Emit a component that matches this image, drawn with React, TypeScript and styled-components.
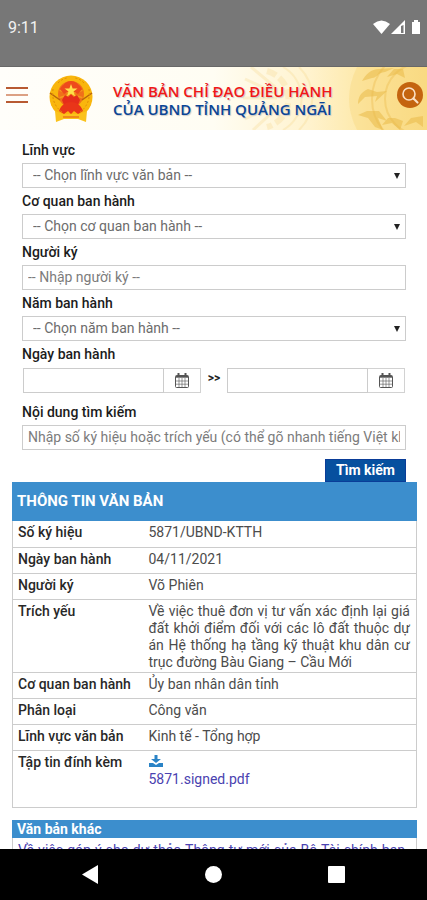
import React from "react";
import styled, { createGlobalStyle } from "styled-components";

const Global = createGlobalStyle`
  * { box-sizing: border-box; }
  body { margin: 0; background: #fff; font-family: Roboto, "Noto Sans", sans-serif; font-size: 14px; color: #4c4c4c; }
  button, input, select { font-family: inherit; font-size: inherit; }
`;

const Screen = styled.div`
  display: flex;
  flex-direction: column;
  height: 100vh;
  overflow: hidden;
`;

const StatusBar = styled.div`
  flex: none;
  display: flex;
  align-items: center;
  justify-content: space-between;
  height: 67px;
  padding: 0 5px 11px 8px;
  background: #777;
  border-bottom: 1px solid #686868;
  color: #f2f2f2;
  font-size: 16px;
`;

const StatusIcons = styled.div`
  display: flex;
  align-items: center;
  gap: 1px;
`;

const Page = styled.main`
  flex: 1;
  min-height: 0;
  overflow: hidden;
`;

const Header = styled.header`
  display: grid;
  height: 63px;
  background: linear-gradient(90deg, #fffefa 0%, #fffdf3 50%, #fff3cf 72%, #fde6a0 88%, #fbdc85 100%);
`;

const Pattern = styled.svg`
  grid-area: 1 / 1;
  justify-self: end;
  width: 220px;
  height: 63px;
`;

const HeaderRow = styled.div`
  grid-area: 1 / 1;
  z-index: 1;
  display: flex;
  align-items: center;
  padding: 0 4px 8px 6px;
`;

const IconButton = styled.button`
  flex: none;
  display: flex;
  padding: 0;
  border: 0;
  background: none;
  cursor: pointer;
`;

const Emblem = styled.svg`
  flex: none;
  margin: 8px 0 0 20px;
`;

const Title = styled.h1`
  flex: 1;
  margin: 9px 0 0 19px;
  font: 600 15px/18px "Open Sans", "Noto Sans", sans-serif;
  white-space: nowrap;
  text-shadow: 1px 1px 1px #c8c8c8;
`;

const TitleLine = styled.span<{ $blue?: boolean }>`
  display: block;
  color: ${(p) => (p.$blue ? "#0b4596" : "#f01818")};
`;

const Form = styled.form`
  display: flex;
  flex-direction: column;
  padding: 7px 21px 0 22px;
`;

const Label = styled.label`
  line-height: 26px;
  font-weight: 500;
  color: #1c1c1c;
`;

const Input = styled.input`
  width: 100%;
  min-width: 0;
  height: 25px;
  padding: 0 5px 2px;
  border: 1px solid #ccc;
  border-radius: 0;
  background: #fff;
  color: #666;
  &::placeholder { color: #7c7c7c; opacity: 1; }
`;

const SelectBox = styled.div`
  display: grid;
  align-items: center;
`;

const Select = styled.select`
  grid-area: 1 / 1;
  width: 100%;
  height: 25px;
  padding: 0 20px 2px 10px;
  border: 1px solid #ccc;
  border-radius: 0;
  background: #fff;
  color: #6c6c6c;
  appearance: none;
`;

const Arrow = styled.svg`
  grid-area: 1 / 1;
  justify-self: end;
  margin-right: 6px;
  pointer-events: none;
`;

const DateRow = styled.div`
  display: flex;
  align-items: center;
  padding: 1px 1px 0;
  margin-bottom: 6px;
`;

const DateField = styled.div`
  flex: 1;
  display: flex;
  min-width: 0;
`;

const CalendarButton = styled.button`
  flex: none;
  display: flex;
  align-items: center;
  justify-content: center;
  width: 37px;
  height: 25px;
  padding: 0;
  border: 1px solid #d2d2d2;
  border-left: 0;
  background: #fff;
  color: #444;
`;

const Between = styled.span`
  padding: 0 7px 6px;
  font-size: 12px;
  font-weight: 700;
  color: #222;
`;

const Submit = styled.button`
  align-self: flex-end;
  width: 81px;
  height: 23px;
  margin-top: 9px;
  padding: 0 0 1px;
  border: 1px solid #0a3d98;
  background: #06509f;
  color: #fff;
  font-weight: 700;
`;

const Section = styled.section`
  margin: 0 10px 12px 12px;
`;

const SectionTitle = styled.h2<{ $compact?: boolean }>`
  margin: 0;
  padding: 0 5px;
  background: #3c8ecd;
  color: #fff;
  font-size: ${(p) => (p.$compact ? 14 : 15)}px;
  line-height: ${(p) => (p.$compact ? 18 : 39)}px;
  font-weight: 700;
`;

const Details = styled.table`
  width: 100%;
  border-collapse: collapse;
  table-layout: fixed;
  border: 1px solid #ccc;
  border-top: 0;
`;

const Row = styled.tr<{ $tall?: boolean }>`
  height: ${(p) => (p.$tall ? 57 : 26)}px;
  border-bottom: 1px solid #ccc;
`;

const Term = styled.th`
  width: 131px;
  padding: 3px 0 1px 5px;
  text-align: left;
  vertical-align: top;
  font-weight: 500;
  line-height: 17px;
  color: #282828;
`;

const Value = styled.td`
  padding: 3px 6px 1px 5px;
  vertical-align: top;
  text-align: justify;
  line-height: 17px;
`;

const FileLink = styled.a`
  display: block;
  color: #4a42b0;
  text-decoration: none;
`;

const OtherList = styled.ul`
  margin: 0;
  padding: 4px 11px 4px 5px;
  border: 1px solid #ccc;
  border-top: 0;
  list-style: none;
  line-height: 17px;
  text-align: justify;
`;

const NavBar = styled.nav`
  flex: none;
  display: flex;
  align-items: center;
  justify-content: center;
  gap: 106px;
  height: 51px;
  background: #000;
`;

const Calendar = () => (
  <svg width="14" height="15" viewBox="0 0 14 15" fill="none" stroke="#555" aria-hidden="true">
    <rect x="0.5" y="2.5" width="13" height="12" rx="1" />
    <path d="M1 3.7h12" strokeWidth="2" />
    <path d="M3.5 0v4M10.5 0v4" strokeWidth="2" />
    <path d="M1 8h12M1 11.2h12M4 5v9M7 5v9M10 5v9" strokeWidth="0.6" />
  </svg>
);

const selects = {
  field: ["Lĩnh vực", "-- Chọn lĩnh vực văn bản --"],
  agency: ["Cơ quan ban hành", "-- Chọn cơ quan ban hành --"],
  year: ["Năm ban hành", "-- Chọn năm ban hành --"],
};

const SelectField = ({ id }: { id: keyof typeof selects }) => (
  <>
    <Label htmlFor={id}>{selects[id][0]}</Label>
    <SelectBox>
      <Select id={id}>
        <option>{selects[id][1]}</option>
      </Select>
      <Arrow width="6" height="6" viewBox="0 0 6 6" aria-hidden="true">
        <path d="M0 0h6L3 6z" fill="#222" />
      </Arrow>
    </SelectBox>
  </>
);

const DatePicker = ({ label, id }: { label: string; id?: string }) => (
  <DateField>
    <Input id={id} type="text" aria-label={label} />
    <CalendarButton type="button" aria-label={"Chọn ngày: " + label}>
      <Calendar />
    </CalendarButton>
  </DateField>
);

const details = [
  ["Số ký hiệu", "5871/UBND-KTTH"],
  ["Ngày ban hành", "04/11/2021"],
  ["Người ký", "Võ Phiên"],
  [
    "Trích yếu",
    "Về việc thuê đơn vị tư vấn xác định lại giá đất khởi điểm đối với các lô đất thuộc dự án Hệ thống hạ tầng kỹ thuật khu dân cư trục đường Bàu Giang – Cầu Mới",
  ],
  ["Cơ quan ban hành", "Ủy ban nhân dân tỉnh"],
  ["Phân loại", "Công văn"],
  ["Lĩnh vực văn bản", "Kinh tế - Tổng hợp"],
];

const HeaderPattern = () => (
  <Pattern viewBox="0 0 220 63" fill="none" aria-hidden="true">
    <g stroke="#f3cd72" opacity="0.22">
      <path d="M76 0a36 36 0 0 1 0 63M92 0a44 44 0 0 1 0 63" strokeWidth="2" />
      <path d="M60 4a29 29 0 0 1 0 56" strokeWidth="6" strokeDasharray="10 4" />
      <path d="M44 0l24 20M38 12l30 14M36 31h34M38 52l30-15M46 63l22-20" strokeWidth="3" />
    </g>
    <path d="M150 0h70v63h-70q-16-31 0-63z" fill="#f8d67c" opacity="0.4" />
    <g stroke="#edbd50" opacity="0.4">
      <circle cx="214" cy="32" r="36" strokeWidth="2" />
      <circle cx="214" cy="32" r="49" strokeWidth="2" />
    </g>
    <g fill="#eabb49" opacity="0.55">
      <path d="M172 2c-8 0-13 5-17 12l10-3c5 0 5-5 13-6l9-4zM161 22c-7 3-10 8-10 15l7-7 12-1-2 6 12-11-10 1zM160 44l-9 4 10 3 7 9 8 3-5-12 9 3-8-10z" />
      <path d="M187 2l-7 8 10-3 8 4-2-9zM181 51l-6 7 10-2 8 7 3-9-8-3zM204 51l-7 8 12-4 7 5V49z" />
    </g>
  </Pattern>
);

const rays = Array.from({ length: 10 }, (_, i) => i * 36);

export default function App() {
  return (
    <Screen>
      <Global />
      <StatusBar>
        <span>9:11</span>
        <StatusIcons>
          <svg width="17" height="15" viewBox="0 0 17 15" aria-hidden="true">
            <path d="M0 4Q8.500-3 17 4L8.500 14z" fill="#fff" />
          </svg>
          <svg width="15" height="15" viewBox="0 0 15 15" aria-hidden="true">
            <path d="M0 14L14 0v14z" fill="#fff" />
            <path d="M10 6v7h2.500V5z" fill="#777" />
          </svg>
          <svg width="15" height="15" viewBox="0 0 15 15" aria-hidden="true">
            <path d="M5 2h2V0h4v2h2v12H5z" fill="#fff" />
          </svg>
        </StatusIcons>
      </StatusBar>
      <Page>
        <Header>
          <HeaderPattern />
          <HeaderRow>
            <IconButton type="button" aria-label="Menu">
              <svg width="22" height="17" viewBox="0 0 22 17" fill="none" strokeWidth="2">
                <path d="M0 1h22M0 15h22" stroke="#b85a32" />
                <path d="M0 8h22" stroke="#dca184" />
              </svg>
            </IconButton>
            <Emblem width="46" height="48" viewBox="0 0 46 48" role="img" aria-label="Quốc huy">
              <circle cx="23" cy="22" r="21.500" fill="#f9b60d" />
              <path d="M7 36l8 3h16l8-3-1 11-8-3H16l-8 3z" fill="#fbc21b" />
              <circle cx="23" cy="19" r="13" fill="#f0701a" />
              <g stroke="#f8c51f" strokeWidth="1.500">
                {rays.map((a) => (
                  <path key={a} d="M23 19V7" transform={`rotate(${a} 23 19)`} opacity="0.5" />
                ))}
              </g>
              <path d="M12 14q5-8 11-8t11 8l-4 5-7-4-7 4z" fill="#ee4a1c" />
              <path d="M23 9l1.600 4.600h4.900l-4 3 1.500 4.700-4-2.900-4 2.900 1.500-4.700-4-3h4.900z" fill="#ffe04a" />
              <path d="M14 25l3-5 3 2 3-3 3 3 3-2 3 5-2 5H16z" fill="#e52d1b" />
              <path d="M2 18l10 7M44 18l-10 7" stroke="#b8630c" strokeWidth="1.500" />
              <path d="M11 36c2-6 7-9 12-9s10 3 12 9l-5 3-4-3-3 3-3-3-4 3z" fill="#e93519" />
              <path d="M15 42h16" stroke="#f08a17" strokeWidth="2" />
              <path d="M5 14q-2 15 9 23M41 14q2 15-9 23M10 8q5-5 10-5M36 8q-5-5-10-5" stroke="#e18c06" fill="none" strokeDasharray="2 2" />
            </Emblem>
            <Title>
              <TitleLine>VĂN BẢN CHỈ ĐẠO ĐIỀU HÀNH</TitleLine>
              <TitleLine $blue>CỦA UBND TỈNH QUẢNG NGÃI</TitleLine>
            </Title>
            <IconButton type="button" aria-label="Tìm kiếm văn bản">
              <svg width="26" height="26" viewBox="0 0 26 26" fill="none">
                <circle cx="13" cy="13" r="13" fill="#c4640f" />
                <circle cx="12" cy="12" r="6" stroke="#fbe0c4" strokeWidth="1.600" />
                <path d="M16.500 16.500l4 4" stroke="#fbe0c4" strokeWidth="2.200" strokeLinecap="round" />
              </svg>
            </IconButton>
          </HeaderRow>
        </Header>
        <Form onSubmit={(e) => e.preventDefault()}>
          <SelectField id="field" />
          <SelectField id="agency" />
          <Label htmlFor="signer">Người ký</Label>
          <Input id="signer" placeholder="-- Nhập người ký --" />
          <SelectField id="year" />
          <Label htmlFor="from">Ngày ban hành</Label>
          <DateRow>
            <DatePicker id="from" label="Từ ngày" />
            <Between>&gt;&gt;</Between>
            <DatePicker label="Đến ngày" />
          </DateRow>
          <Label htmlFor="query">Nội dung tìm kiếm</Label>
          <Input id="query" placeholder="Nhập số ký hiệu hoặc trích yếu (có thể gõ nhanh tiếng Việt không dấu)" />
          <Submit type="submit">Tìm kiếm</Submit>
        </Form>
        <Section>
          <SectionTitle>THÔNG TIN VĂN BẢN</SectionTitle>
          <Details>
            <tbody>
              {details.map(([term, value]) => (
                <Row key={term}>
                  <Term scope="row">{term}</Term>
                  <Value>{value}</Value>
                </Row>
              ))}
              <Row $tall>
                <Term scope="row">Tập tin đính kèm</Term>
                <Value>
                  <FileLink href="#file">
                    <svg width="14" height="12" viewBox="0 0 14 12" aria-hidden="true">
                      <path d="M5.500 0h3v4H12L7 8 2 4h3.500z" fill="#2a83c6" />
                      <path d="M0 8h4l3 2 3-2h4v4H0z" fill="#2a83c6" />
                    </svg>
                    <br />
                    5871.signed.pdf
                  </FileLink>
                </Value>
              </Row>
            </tbody>
          </Details>
        </Section>
        <Section>
          <SectionTitle $compact>Văn bản khác</SectionTitle>
          <OtherList>
            <li>
              <FileLink href="#other">
                Về việc góp ý cho dự thảo Thông tư mới của Bộ Tài chính ban hành
              </FileLink>
            </li>
          </OtherList>
        </Section>
      </Page>
      <NavBar aria-label="Điều hướng hệ thống">
        <IconButton type="button" aria-label="Quay lại">
          <svg width="17" height="19" viewBox="0 0 17 19"><path d="M0 9.500L16 0v19z" fill="#fff" /></svg>
        </IconButton>
        <IconButton type="button" aria-label="Trang chủ">
          <svg width="17" height="17" viewBox="0 0 17 17"><circle cx="8.500" cy="8.500" r="8.500" fill="#fff" /></svg>
        </IconButton>
        <IconButton type="button" aria-label="Gần đây">
          <svg width="17" height="17" viewBox="0 0 17 17"><rect width="17" height="17" rx="1" fill="#fff" /></svg>
        </IconButton>
      </NavBar>
    </Screen>
  );
}
